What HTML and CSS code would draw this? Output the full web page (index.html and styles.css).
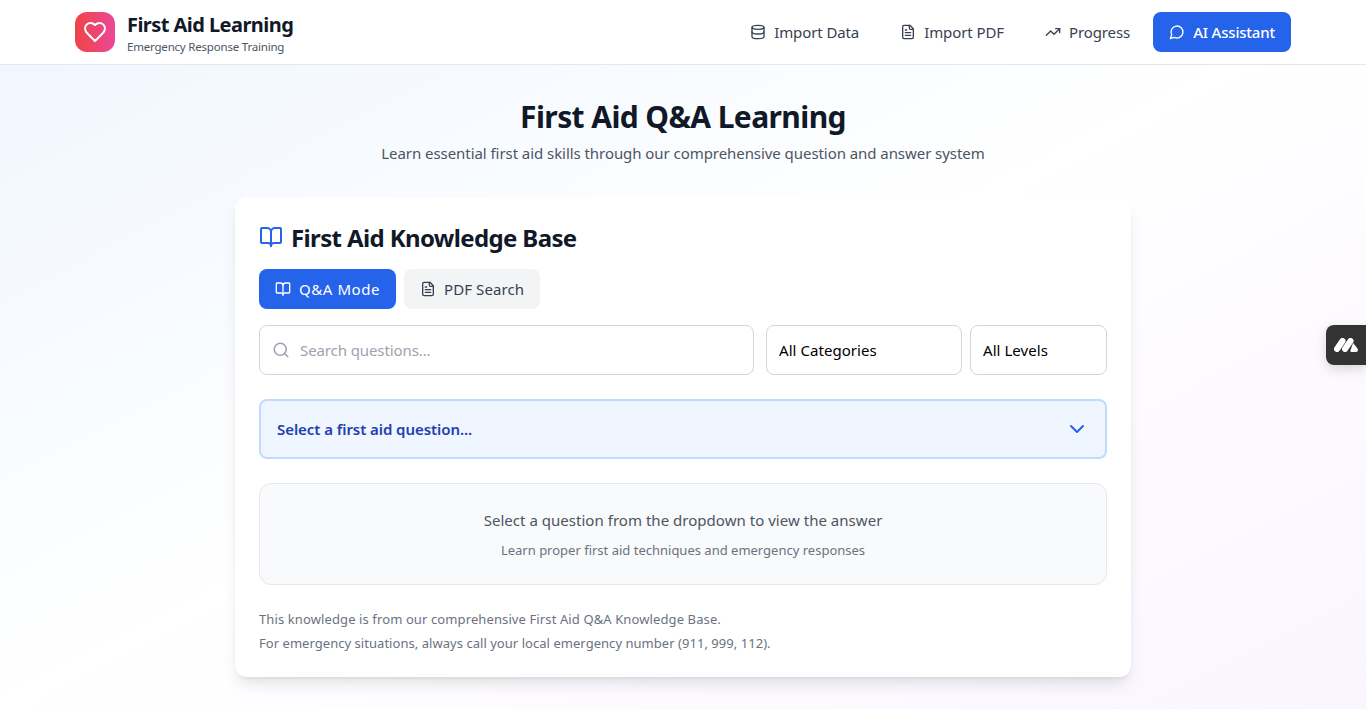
FILE: index.html
```html
<!DOCTYPE html>
<html lang="en">
<head>
    <meta charset="UTF-8">
    <title>First Aid Learning</title>
    <link rel="stylesheet" href="styles.css">
</head>
<body>
    <header class="topbar">
        <div class="topbar-inner">
            <div class="brand">
                <div class="brand-logo">
                    <svg width="24" height="24" viewBox="0 0 24 24" class="icon"><path d="M19 14c1.49-1.46 3-3.21 3-5.5A5.5 5.5 0 0 0 16.5 3c-1.76 0-3 .5-4.5 2-1.5-1.5-2.74-2-4.5-2A5.5 5.5 0 0 0 2 8.500c0 2.300 1.500 4.050 3 5.500l7 7Z"/></svg>
                </div>
                <div class="brand-text">
                    <div class="brand-name">First Aid Learning</div>
                    <div class="brand-sub">Emergency Response Training</div>
                </div>
            </div>
            <nav class="nav">
                <a class="nav-link">
                    <svg width="16" height="16" viewBox="0 0 24 24" class="icon"><ellipse cx="12" cy="5" rx="9" ry="3"/><path d="M3 5v14a9 3 0 0 0 18 0V5"/><path d="M3 12a9 3 0 0 0 18 0"/></svg>
                    Import Data
                </a>
                <a class="nav-link">
                    <svg width="16" height="16" viewBox="0 0 24 24" class="icon"><path d="M15 2H6a2 2 0 0 0-2 2v16a2 2 0 0 0 2 2h12a2 2 0 0 0 2-2V7Z"/><path d="M14 2v4a2 2 0 0 0 2 2h4"/><path d="M16 13H8"/><path d="M16 17H8"/><path d="M10 9H8"/></svg>
                    Import PDF
                </a>
                <a class="nav-link">
                    <svg width="16" height="16" viewBox="0 0 24 24" class="icon"><polyline points="22 7 13.500 15.500 8.500 10.500 2 17"/><polyline points="16 7 22 7 22 13"/></svg>
                    Progress
                </a>
                <a class="nav-cta">
                    <svg width="16" height="16" viewBox="0 0 24 24" class="icon"><path d="M7.900 20A9 9 0 1 0 4 16.100L2 22Z"/></svg>
                    AI Assistant
                </a>
            </nav>
        </div>
    </header>

    <main class="page">
        <h1 class="page-title">First Aid Q&amp;A Learning</h1>
        <p class="page-sub">Learn essential first aid skills through our comprehensive question and answer system</p>

        <section class="card">
            <h2 class="card-title">
                <svg width="24" height="24" viewBox="0 0 24 24" class="icon icon-blue"><path d="M12 7v14"/><path d="M3 18a1 1 0 0 1-1-1V4a1 1 0 0 1 1-1h5a4 4 0 0 1 4 4 4 4 0 0 1 4-4h5a1 1 0 0 1 1 1v13a1 1 0 0 1-1 1h-6a3 3 0 0 0-3 3 3 3 0 0 0-3-3z"/></svg>
                <span class="card-title-text">First Aid Knowledge Base</span>
            </h2>

            <div class="tabs">
                <button class="tab tab-active">
                    <svg width="16" height="16" viewBox="0 0 24 24" class="icon"><path d="M12 7v14"/><path d="M3 18a1 1 0 0 1-1-1V4a1 1 0 0 1 1-1h5a4 4 0 0 1 4 4 4 4 0 0 1 4-4h5a1 1 0 0 1 1 1v13a1 1 0 0 1-1 1h-6a3 3 0 0 0-3 3 3 3 0 0 0-3-3z"/></svg>
                    Q&amp;A Mode
                </button>
                <button class="tab">
                    <svg width="16" height="16" viewBox="0 0 24 24" class="icon"><path d="M15 2H6a2 2 0 0 0-2 2v16a2 2 0 0 0 2 2h12a2 2 0 0 0 2-2V7Z"/><path d="M14 2v4a2 2 0 0 0 2 2h4"/><path d="M16 13H8"/><path d="M16 17H8"/><path d="M10 9H8"/></svg>
                    PDF Search
                </button>
            </div>

            <div class="filters">
                <label class="search">
                    <svg width="18" height="18" viewBox="0 0 24 24" class="icon search-icon"><circle cx="11" cy="11" r="8"/><path d="m21 21-4.300-4.300"/></svg>
                    <input class="search-input" type="text" placeholder="Search questions...">
                </label>
                <select class="select select-cat"><option>All Categories</option></select>
                <select class="select select-level"><option>All Levels</option></select>
            </div>

            <div class="question-picker">
                <span>Select a first aid question...</span>
                <svg width="24" height="24" viewBox="0 0 24 24" class="icon icon-blue"><path d="m6 9 6 6 6-6"/></svg>
            </div>

            <div class="placeholder">
                <p class="placeholder-main">Select a question from the dropdown to view the answer</p>
                <p class="placeholder-sub">Learn proper first aid techniques and emergency responses</p>
            </div>

            <div class="footnote">
                <p class="footnote-first">This knowledge is from our comprehensive First Aid Q&amp;A Knowledge Base.</p>
                <p>For emergency situations, always call your local emergency number (911, 999, 112).</p>
            </div>
        </section>
    </main>

    <!-- floating widget on the right edge -->
    <div class="side-widget">
        <svg width="24" height="14" viewBox="0 0 24 14"><path d="M3 11 8.500 3" class="mark"/><path d="M11 11 16.500 3" class="mark"/><path d="M19.500 5.500C21 7.500 24 10.500 24 12a2 2 0 0 1-2 2h-4.500c-1 0-1.500-.8-1-1.700l2-5.800c.4-1 1.200-1.700 1.500-1Z" fill="#fff"/></svg>
    </div>
</body>
</html>
```

FILE: styles.css
```css
* { box-sizing: border-box; }
body {
    margin: 0;
    min-height: 709px;
    font-family: "Noto Sans", "Open Sans", sans-serif;
    background: linear-gradient(to bottom right, #eff6ff 0%, #ffffff 50%, #faf5ff 100%);
    color: #111827;
    overflow: hidden;
}
p, h1, h2 { margin: 0; }

.icon { fill: none; stroke: currentColor; stroke-width: 2; stroke-linecap: round; stroke-linejoin: round; flex: none; }
.icon-blue { color: #2563eb; }

.topbar { background: #fff; border-bottom: 1px solid #e5e7eb; height: 65px; }
.topbar-inner { max-width: 1280px; margin: 0 auto; padding: 0 32px; height: 64px; display: flex; align-items: center; justify-content: space-between; }
.brand { display: flex; align-items: center; gap: 12px; }
.brand-logo { width: 40px; height: 40px; border-radius: 12px; background: linear-gradient(90deg, #ef4444, #ec4899); color: #fff; display: flex; align-items: center; justify-content: center; }
.brand-text { padding-top: 2px; }
.brand-name { font-size: 20px; line-height: 28px; font-weight: 700; letter-spacing: -0.55px; }
.brand-sub { font-size: 11.5px; line-height: 16px; color: #4b5563; letter-spacing: -0.2px; }

.nav { display: flex; align-items: center; gap: 8px; }
.nav-link, .nav-cta { display: flex; align-items: center; gap: 8px; height: 40px; border-radius: 8px; font-size: 15px; }
.nav-link { color: #374151; padding: 0 15px 0 18px; letter-spacing: -0.1px; }
.nav-cta { background: #2563eb; color: #fff; padding: 0 16px; font-weight: 500; letter-spacing: -0.2px; }

.page { width: 896px; margin: 0 auto; padding-top: 34px; }
.page-title { font-size: 30px; line-height: 36px; font-weight: 700; text-align: center; letter-spacing: -0.6px; margin-bottom: 6px; }
.page-sub { font-size: 15px; line-height: 24px; color: #4b5563; text-align: center; letter-spacing: -0.06px; margin-bottom: 32px; }

.card { background: #fff; border-radius: 12px; box-shadow: 0 10px 15px -3px rgba(0,0,0,0.1), 0 4px 6px -4px rgba(0,0,0,0.1); padding: 24px; height: 480px; }
.card-title { display: flex; align-items: center; gap: 8px; height: 32px; font-size: 24px; line-height: 32px; font-weight: 700; letter-spacing: -0.63px; margin-bottom: 16px; }
.card-title-text { padding-top: 2px; }

.tabs { display: flex; gap: 8px; margin-bottom: 16px; }
.tab { display: flex; align-items: center; gap: 8px; height: 40px; padding: 0 16px; border: none; border-radius: 8px; background: #f3f4f6; color: #374151; font-family: inherit; font-size: 15px; letter-spacing: 0.1px; }
.tab-active { background: #2563eb; color: #fff; letter-spacing: 0.55px; }

.filters { display: flex; gap: 8px; margin-bottom: 24px; }
.search { flex: none; width: 495px; margin-right: 4px; height: 50px; display: flex; align-items: center; gap: 10px; padding: 0 12px; background: #fff; border: 1px solid #d1d5db; border-radius: 8px; }
.search-icon { color: #9ca3af; }
.search-input { border: none; outline: none; flex: 1; min-width: 0; padding: 0; font-family: inherit; font-size: 15px; letter-spacing: -0.1px; color: #111827; background: transparent; }
.search-input::placeholder { color: #9ca3af; }
.select { appearance: none; height: 50px; padding: 0 12px; background: #fff; border: 1px solid #d1d5db; border-radius: 8px; font-family: inherit; font-size: 15px; letter-spacing: 0.05px; color: #000; }
.select-cat { width: 196px; }
.select-level { width: 137px; }

.question-picker { height: 60px; display: flex; align-items: center; justify-content: space-between; padding: 0 16px; background: #eff6ff; border: 2px solid #bfdbfe; border-radius: 8px; color: #1e40af; font-size: 15px; font-weight: 600; letter-spacing: -0.06px; margin-bottom: 24px; }

.placeholder { height: 102px; display: flex; flex-direction: column; align-items: center; justify-content: center; gap: 8px; background: #f9fafb; border: 1px solid #e5e7eb; border-radius: 12px; }
.placeholder-main { font-size: 15px; line-height: 24px; color: #4b5563; letter-spacing: 0.03px; }
.placeholder-sub { font-size: 13px; line-height: 20px; color: #6b7280; }

.footnote { margin-top: 22px; font-size: 13px; line-height: 24px; color: #6b7280; letter-spacing: 0.04px; }
.footnote-first { letter-spacing: 0.11px; }

.side-widget { position: fixed; top: 325px; right: 0; width: 40px; height: 40px; background: #333; border-radius: 8px 0 0 8px; box-shadow: 0 4px 12px rgba(0,0,0,0.15); display: flex; align-items: center; justify-content: center; }
.mark { stroke: #fff; stroke-width: 6; stroke-linecap: round; fill: none; }
```
